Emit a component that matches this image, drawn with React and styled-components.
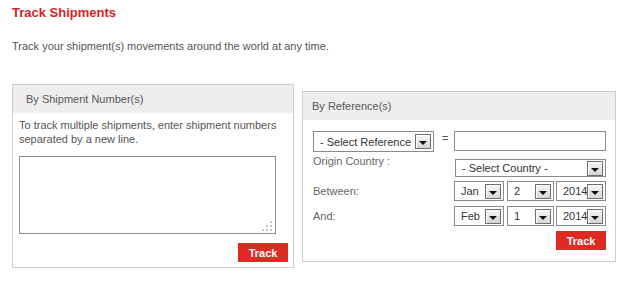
import React from "react";
import styled, { createGlobalStyle } from "styled-components";

const GlobalStyle = createGlobalStyle`
    body {
        margin: 0;
        background: #fff;
        font-family: "Liberation Sans", Arial, sans-serif;
    }
`;

function DropArrow() {
    return <Arrow />;
}

function FakeSelect({ width, height, value }) {
    return (
        <SelectBox $width={width} $height={height}>
            <SelectText>{value}</SelectText>
            <DropArrow />
        </SelectBox>
    );
}

function Grip() {
    const dots = [
        [9, 0],
        [5, 4],
        [9, 4],
        [1, 8],
        [5, 8],
        [9, 8],
    ];
    return (
        <GripSvg width="11" height="10" viewBox="0 0 11 10">
            {dots.map(([x, y], i) => (
                <rect key={i} x={x} y={y} width="2" height="2" fill="#c4c4c4" />
            ))}
        </GripSvg>
    );
}

function App() {
    return (
        <Page>
            <GlobalStyle />
            <Title>Track Shipments</Title>
            <Intro>Track your shipment(s) movements around the world at any time.</Intro>

            <Panels>
                <Panel $width={282}>
                    <PanelHeader $pad={13}>By Shipment Number(s)</PanelHeader>
                    <NumberBody>
                        <Hint>
                            To track multiple shipments, enter shipment numbers
                            <br />
                            separated by a new line.
                        </Hint>
                        <TextareaWrap>
                            <NumbersInput />
                            <Grip />
                        </TextareaWrap>
                        <ButtonRow $top={9}>
                            <TrackButton>Track</TrackButton>
                        </ButtonRow>
                    </NumberBody>
                </Panel>

                <Panel $width={314} $offset={7}>
                    <PanelHeader $pad={9}>By Reference(s)</PanelHeader>
                    <ReferenceBody>
                        <RefRow>
                            <FakeSelect width={121} height={21} value="- Select Reference" />
                            <Equals>=</Equals>
                            <RefInput />
                        </RefRow>
                        <FormRow $top={0}>
                            <Label $top={2}>Origin Country :</Label>
                            <Controls $top={7}>
                                <FakeSelect width={151} height={18} value="- Select Country -" />
                            </Controls>
                        </FormRow>
                        <FormRow $top={4}>
                            <Label $top={3}>Between:</Label>
                            <Controls>
                                <FakeSelect width={50} height={20} value="Jan" />
                                <FakeSelect width={47} height={20} value="2" />
                                <FakeSelect width={50} height={20} value="2014" />
                            </Controls>
                        </FormRow>
                        <FormRow $top={5}>
                            <Label $top={3}>And:</Label>
                            <Controls>
                                <FakeSelect width={50} height={20} value="Feb" />
                                <FakeSelect width={47} height={20} value="1" />
                                <FakeSelect width={50} height={20} value="2014" />
                            </Controls>
                        </FormRow>
                        <ButtonRow $top={5}>
                            <TrackButton>Track</TrackButton>
                        </ButtonRow>
                    </ReferenceBody>
                </Panel>
            </Panels>
        </Page>
    );
}

export default App;

const Page = styled.div`
    padding: 5px 12px 0 12px;
`;

const Title = styled.h1`
    margin: 0;
    font-size: 13px;
    line-height: 16px;
    font-weight: bold;
    color: #d81e27;
`;

const Intro = styled.p`
    margin: 18px 0 0;
    font-size: 11px;
    line-height: 14px;
    color: #555;
`;

const Panels = styled.div`
    display: flex;
    align-items: flex-start;
    gap: 8px;
    margin-top: 31px;
`;

const Panel = styled.section`
    box-sizing: border-box;
    width: ${({ $width }) => $width}px;
    margin-top: ${({ $offset }) => $offset || 0}px;
    border: 1px solid #cdcdcd;
    background: #fff;
`;

const PanelHeader = styled.div`
    display: flex;
    align-items: center;
    height: 28px;
    padding-left: ${({ $pad }) => $pad}px;
    background: #efeeef;
    font-size: 11px;
    color: #555;
`;

const NumberBody = styled.div`
    padding: 5px 5px 5px 6px;
`;

const Hint = styled.p`
    margin: 0;
    font-size: 11px;
    line-height: 14px;
    color: #555;
`;

const TextareaWrap = styled.div`
    position: relative;
    width: 257px;
    height: 78px;
    margin-top: 10px;
`;

const NumbersInput = styled.textarea`
    box-sizing: border-box;
    display: block;
    width: 100%;
    height: 100%;
    margin: 0;
    padding: 2px;
    border: 1px solid #8e8e8e;
    resize: none;
    outline: none;
    font-family: "Liberation Sans", Arial, sans-serif;
    font-size: 11px;
`;

const GripSvg = styled.svg`
    position: absolute;
    right: 4px;
    bottom: 3px;
`;

const ButtonRow = styled.div`
    display: flex;
    justify-content: flex-end;
    margin-top: ${({ $top }) => $top}px;
`;

const TrackButton = styled.button`
    width: 50px;
    height: 19px;
    padding: 0;
    border: none;
    background: #df2a23;
    color: #fff;
    font-family: "Liberation Sans", Arial, sans-serif;
    font-size: 11px;
    font-weight: bold;
    cursor: pointer;
`;

const ReferenceBody = styled.div`
    padding: 11px 9px 11px 10px;
`;

const RefRow = styled.div`
    display: flex;
    align-items: flex-start;
    height: 21px;
`;

const Equals = styled.span`
    margin-left: 8px;
    font-size: 11px;
    line-height: 14px;
    color: #555;
`;

const RefInput = styled.input`
    box-sizing: border-box;
    width: 152px;
    height: 20px;
    margin: 0 0 0 auto;
    border: 1px solid #8c8c8c;
    outline: none;
`;

const FormRow = styled.div`
    display: flex;
    align-items: flex-start;
    justify-content: space-between;
    margin-top: ${({ $top }) => $top}px;
`;

const Label = styled.span`
    margin-top: ${({ $top }) => $top}px;
    font-size: 11px;
    line-height: 14px;
    color: #666;
`;

const Controls = styled.div`
    display: flex;
    gap: 2px;
    margin-top: ${({ $top }) => $top || 0}px;
`;

const SelectBox = styled.div`
    position: relative;
    box-sizing: border-box;
    display: flex;
    align-items: center;
    width: ${({ $width }) => $width}px;
    height: ${({ $height }) => $height}px;
    padding-left: 6px;
    border: 1px solid #8a8a8a;
    background: #fff;
    overflow: hidden;

    &:first-child + & {
        margin-left: 1px;
    }
`;

const SelectText = styled.span`
    font-size: 11px;
    color: #333;
    white-space: nowrap;
`;

const Arrow = styled.span`
    position: absolute;
    right: 2px;
    top: 50%;
    box-sizing: border-box;
    width: 16px;
    height: 15px;
    margin-top: -7.5px;
    border: 1px solid #6e6e6e;
    background: linear-gradient(#f6f6f6, #d6d6d6);
    box-shadow: inset 1px 1px 0 #fff;

    &::after {
        content: "";
        position: absolute;
        left: 3px;
        top: 6px;
        border-left: 4px solid transparent;
        border-right: 4px solid transparent;
        border-top: 4px solid #111;
    }
`;
